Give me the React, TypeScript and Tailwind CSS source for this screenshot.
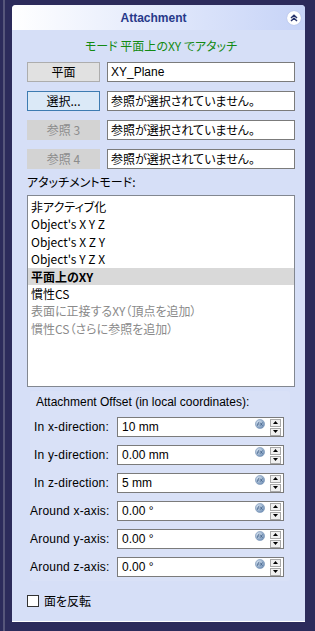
import React from "react";

const jp = "font-['Noto_Sans_CJK_JP',sans-serif] [font-feature-settings:'palt']";

function Spin() {
  return (
    <div className="flex flex-col gap-px mr-[2px]">
      <div className="w-[11px] h-[8px] bg-[#f0f0f0] border border-[#a8a8a8] flex items-center justify-center">
        <svg width="5" height="3" viewBox="0 0 5 3"><path d="M0 3 L2.5 0 L5 3 Z" fill="#000" /></svg>
      </div>
      <div className="w-[11px] h-[8px] bg-[#f0f0f0] border border-[#a8a8a8] flex items-center justify-center">
        <svg width="5" height="3" viewBox="0 0 5 3"><path d="M0 0 L2.5 3 L5 0 Z" fill="#000" /></svg>
      </div>
    </div>
  );
}

function ExprIcon() {
  return (
    <svg width="10" height="10" viewBox="0 0 10 10" className="self-start mt-[1px] mr-[5px]">
      <defs>
        <radialGradient id="g" cx="35%" cy="35%" r="70%">
          <stop offset="0%" stopColor="#dbe6f3" />
          <stop offset="100%" stopColor="#6f8fb5" />
        </radialGradient>
      </defs>
      <circle cx="5" cy="5" r="4.6" fill="url(#g)" stroke="#7d98bb" strokeWidth="0.6" />
      <path d="M2.3 6.8 C3 4, 3.5 3, 4.3 3 M3 5 L4.6 5 M5 3.5 L7.5 6.8 M7.5 3.5 L5 6.8" stroke="#3f5f88" strokeWidth="0.8" fill="none" />
    </svg>
  );
}

function OffsetRow({ label, value }: { label: string; value: string }) {
  return (
    <div className="flex items-center h-[20px]">
      <div className="w-[87px] text-right pr-[8px] text-[12px] text-black font-['Liberation_Sans',sans-serif] whitespace-nowrap tracking-[0.2px]">{label}</div>
      <div className="w-[167px] h-[20px] bg-white border border-[#7b7b7b] flex items-center">
        <span className="flex-1 pl-[4px] text-[12px] text-black font-['Liberation_Sans',sans-serif] whitespace-pre">{value}</span>
        <ExprIcon />
        <Spin />
      </div>
    </div>
  );
}

function RefRow({ btn, kind }: { btn: string; kind: "normal" | "active" | "disabled" }) {
  const cls =
    kind === "normal"
      ? "bg-[#e1e1e1] border-[#adadad] text-black"
      : kind === "active"
      ? "bg-[#dbe9f7] border-[#3d7bb1] text-black"
      : "bg-[#d3d3d3] border-[#d3d3d3] text-[#8c8c8c]";
  return (
    <div className="flex items-center gap-[7px] h-[20px]">
      <div className={`w-[73px] h-[20px] border flex items-center justify-center text-[12px] ${jp} ${cls}`}>{btn}</div>
      <div className={`w-[188px] h-[20px] bg-white border border-[#7b7b7b] flex items-center pl-[3px] text-[12px] text-black ${jp}`}>
        {btn === "平面" ? <span className="font-['Liberation_Sans',sans-serif]">XY_Plane</span> : "参照が選択されていません。"}
      </div>
    </div>
  );
}

export default function App() {
  const items: { t: string; s?: "sel" | "dis" }[] = [
    { t: "非アクティブ化" },
    { t: "Object's X Y Z" },
    { t: "Object's X Z Y" },
    { t: "Object's Y Z X" },
    { t: "平面上のXY", s: "sel" },
    { t: "慣性CS" },
    { t: "表面に正接するXY（頂点を追加）", s: "dis" },
    { t: "慣性CS（さらに参照を追加）", s: "dis" },
  ];
  return (
    <div className="w-[315px] h-[631px] bg-[#2c2b5b] flex overflow-hidden">
      <div className="w-[3px]" />
      <div className="w-[2px] bg-[#56567a]" />
      <div className="w-[7px]" />
      <div className="mt-[5px] w-[293px] h-[617px] flex flex-col rounded-t-[4px] overflow-hidden bg-[#d6dff7] border-b border-white">
        <div className="h-[25px] flex items-center relative bg-gradient-to-r from-white to-[#c6d3f7] shrink-0">
          <div className="flex-1 text-center text-[12px] font-bold text-[#27398a] font-['Liberation_Sans',sans-serif] pl-[8px]">Attachment</div>
          <div className="w-[14px] h-[14px] rounded-full bg-white mr-[4px] flex items-center justify-center shadow-[0_0_1px_#8fa0d0]">
            <svg width="8" height="8" viewBox="0 0 8 8">
              <path d="M1 4 L4 1.2 L7 4 M1 7 L4 4.2 L7 7" stroke="#27336b" strokeWidth="1.5" fill="none" />
            </svg>
          </div>
        </div>
        <div className="flex flex-col pl-[15px] pr-[10px]">
          <div className={`h-[32px] flex items-center justify-center text-[12px] text-[#138a13] ${jp}`}>モード 平面上のXY でアタッチ</div>
          <div className="flex flex-col gap-[9px]">
            <RefRow btn="平面" kind="normal" />
            <RefRow btn="選択..." kind="active" />
            <RefRow btn="参照 3" kind="disabled" />
            <RefRow btn="参照 4" kind="disabled" />
          </div>
          <div className={`mt-[3px] h-[20px] flex items-center text-[12px] text-black ${jp}`}>アタッチメントモード:</div>
          <div className="mt-[3px] h-[192px] bg-white border border-[#828790] pt-[2px] flex flex-col">
            {items.map((it, i) => (
              <div
                key={i}
                className={`h-[17.4px] leading-[17.4px] pl-[3px] text-[12px] ${jp} ${
                  it.s === "sel" ? "bg-[#d9d9d9] font-bold text-black" : it.s === "dis" ? "text-[#8a8a8a]" : "text-black"
                }`}
              >
                {it.t}
              </div>
            ))}
          </div>
          <div className="mt-[4px] ml-[3px] mr-[5px] bg-[#d9e1f7] rounded-[3px] pb-[4px] flex flex-col">
            <div className="h-[22px] flex items-center pl-[6px] text-[12px] text-black font-['Liberation_Sans',sans-serif]">Attachment Offset (in local coordinates):</div>
            <div className="flex flex-col gap-[8px] mt-[4px]">
              <OffsetRow label="In x-direction:" value="10 mm" />
              <OffsetRow label="In y-direction:" value="0.00 mm" />
              <OffsetRow label="In z-direction:" value="5 mm" />
              <OffsetRow label="Around x-axis:" value="0.00 °" />
              <OffsetRow label="Around y-axis:" value="0.00 °" />
              <OffsetRow label="Around z-axis:" value="0.00 °" />
            </div>
          </div>
          <div className="mt-[11px] flex items-center gap-[5px]">
            <div className="w-[12px] h-[12px] bg-white border border-[#333]" />
            <span className={`text-[12px] text-black ${jp}`}>面を反転</span>
          </div>
        </div>
      </div>
    </div>
  );
}
